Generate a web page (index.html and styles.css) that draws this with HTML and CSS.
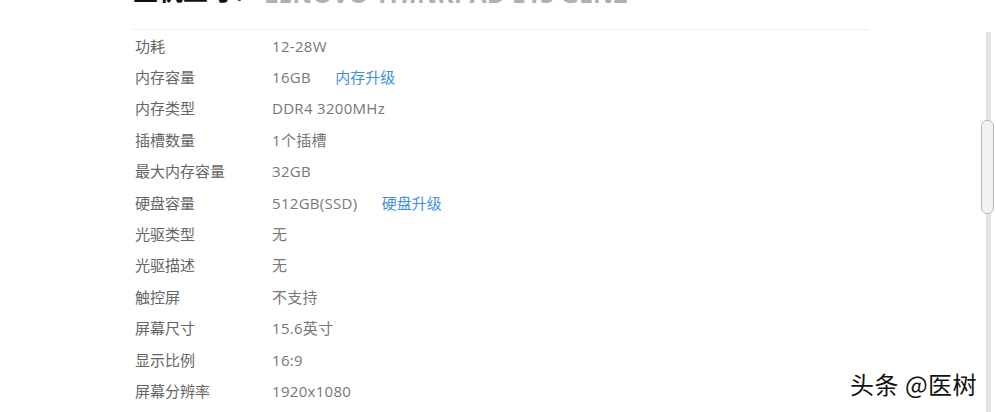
FILE: index.html
```html
<!DOCTYPE html>
<html>
<head>
  <title>参数</title>
  <link rel="stylesheet" href="styles.css">
</head>
<body>
  <div class="page">
    <div class="content">
      <h2 class="title">主机型号：<span class="sub">LENOVO THINKPAD E15 GEN2</span></h2>
      <table class="specs">
        <tr><td class="key">功耗</td><td>12-28W</td></tr>
        <tr><td class="key">内存容量</td><td>16GB <a class="up" href="#">内存升级</a></td></tr>
        <tr><td class="key">内存类型</td><td>DDR4 3200MHz</td></tr>
        <tr><td class="key">插槽数量</td><td>1个插槽</td></tr>
        <tr><td class="key">最大内存容量</td><td>32GB</td></tr>
        <tr><td class="key">硬盘容量</td><td>512GB(SSD) <a class="up" href="#">硬盘升级</a></td></tr>
        <tr><td class="key">光驱类型</td><td>无</td></tr>
        <tr><td class="key">光驱描述</td><td>无</td></tr>
        <tr><td class="key">触控屏</td><td>不支持</td></tr>
        <tr><td class="key">屏幕尺寸</td><td>15.6英寸</td></tr>
        <tr><td class="key">显示比例</td><td>16:9</td></tr>
        <tr><td class="key">屏幕分辨率</td><td>1920x1080</td></tr>
      </table>
    </div>
    <div class="scrollbar">
      <div class="thumb"></div>
    </div>
  </div>
  <div class="mark">头条 @医树</div>
</body>
</html>
```

FILE: styles.css
```css
body {
  margin: 0;
  height: 412px;
  overflow: hidden;
  background: #fff;
  font-family: "Open Sans", "Noto Sans CJK SC", sans-serif;
}

.page {
  display: flex;
  height: 412px;
}

.content {
  flex: 1;
  padding-left: 133px;
  padding-right: 112px;
}

.title {
  margin: -23px 0 0 0;
  height: 52px;
  font-size: 25px;
  line-height: 26px;
  font-weight: bold;
  color: #111;
  border-bottom: 1px solid #eeeeee;
  white-space: nowrap;
  overflow: hidden;
}

.title .sub {
  color: #b0b0b0;
  margin-left: 6px;
  vertical-align: -3px;
}

.specs {
  border-collapse: collapse;
  font-size: 15px;
  color: #777;
}

.specs td {
  height: 31.4px;
  padding: 0;
  line-height: 20px;
  letter-spacing: 0.3px;
}

.specs .key {
  width: 137px;
  padding-left: 2px;
  color: #666;
  letter-spacing: 0;
}

.up {
  color: #3f8fe0;
  text-decoration: none;
  margin-left: 20px;
  letter-spacing: 0;
}

.scrollbar {
  width: 14px;
  margin: 32px 1px 0 0;
  position: relative;
  display: flex;
  justify-content: center;
}

.scrollbar::before {
  content: "";
  width: 5px;
  background: #e4e4e4;
}

.thumb {
  position: absolute;
  top: 88px;
  left: 0;
  width: 11px;
  height: 92px;
  background: #f2f2f2;
  border: 1px solid #b8b8b8;
  border-radius: 6px;
}

.mark {
  position: absolute;
  left: 850px;
  top: 366px;
  font-family: "Noto Sans CJK SC", sans-serif;
  font-size: 24px;
  letter-spacing: 0.5px;
  color: #111;
  text-shadow: 1px 1px 0 #fff, -1px -1px 0 #fff, 1px -1px 0 #fff, -1px 1px 0 #fff;
}
```
